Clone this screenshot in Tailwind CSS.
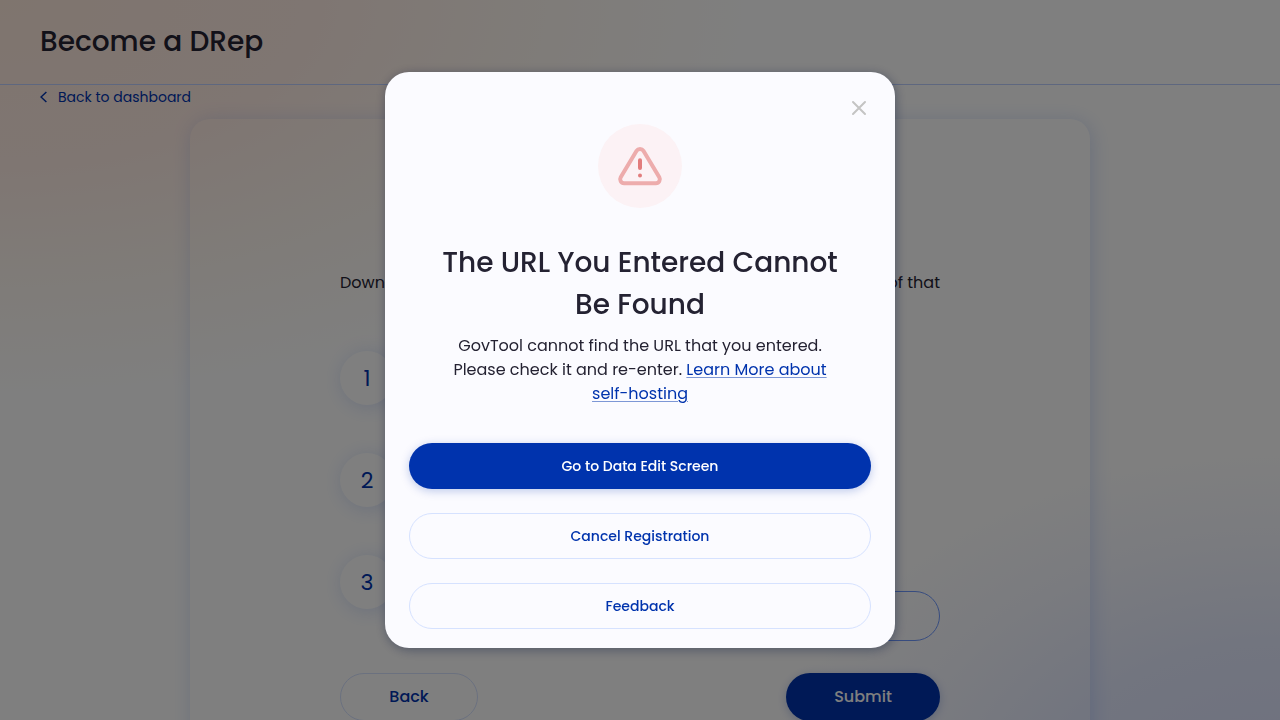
<!DOCTYPE html>
<html lang="en">
<head>
<meta charset="utf-8">
<meta name="viewport" content="width=device-width, initial-scale=1">
<title>Become a DRep</title>
<script src="https://cdn.jsdelivr.net/npm/@tailwindcss/browser@4"></script>
</head>
<body class="font-[Poppins,Inter,sans-serif] text-[#242232]">
<div class="h-screen overflow-hidden bg-white bg-[radial-gradient(ellipse_760px_400px_at_0px_0px,#ffeadd_0%,#ffece4_40%,#fff7f0_68%,transparent_100%),radial-gradient(ellipse_520px_360px_at_100%_112%,#dce0ff_0%,#e4eaff_45%,#f5f7ff_75%,transparent_100%)]">
  <header class="flex h-[85px] items-center border-b border-[#bccfff] px-10">
    <h1 class="text-[28px] font-medium">Become a DRep</h1>
  </header>
  <main class="flex flex-col pt-0.5">
    <a href="#" class="ml-10 flex h-5 items-center gap-2.5 self-start text-sm text-[#0033ad]">
      <svg class="h-3 w-2" viewBox="0 0 8 12" fill="none" stroke="currentColor" stroke-width="1.5"><path d="M6.400 1 1 6l5.400 5"/></svg>
      Back to dashboard
    </a>
    <section class="mx-auto mt-3 w-full max-w-[900px] rounded-[20px] px-[150px] pb-20 pt-[152px] shadow-[2px_2px_20px_0_rgba(47,98,220,0.2)]">
      <p class="flex justify-between whitespace-nowrap leading-6"><span>Down</span><span>of that</span></p>
      <ol class="mt-14 flex flex-col gap-12">
        <li class="flex gap-6"><span class="flex size-[54px] items-center justify-center rounded-full text-[22px] text-[#0033ad] shadow-[2px_2px_20px_0_rgba(47,98,220,0.2)]">1</span></li>
        <li class="flex gap-6"><span class="flex size-[54px] items-center justify-center rounded-full text-[22px] text-[#0033ad] shadow-[2px_2px_20px_0_rgba(47,98,220,0.2)]">2</span></li>
        <li class="flex gap-6">
          <span class="flex size-[54px] shrink-0 items-center justify-center rounded-full text-[22px] text-[#0033ad] shadow-[2px_2px_20px_0_rgba(47,98,220,0.2)]">3</span>
          <div class="grow pt-9">
            <input type="url" aria-label="URL" class="block h-[50px] w-full rounded-full border border-[#6f99ff] px-4">
          </div>
        </li>
      </ol>
      <div class="mt-8 flex justify-between">
        <button type="button" class="h-12 w-[138px] rounded-full border border-[#d6e2ff] font-medium text-[#0033ad]">Back</button>
        <button type="button" class="h-12 w-[154px] rounded-full bg-[#0033ad] font-medium text-white shadow-[0_2px_10px_0_rgba(0,51,173,0.25)]">Submit</button>
      </div>
    </section>
  </main>
</div>

<div class="fixed inset-0 flex items-center justify-center bg-black/50">
  <div role="dialog" aria-modal="true" aria-labelledby="dialog-title" class="relative w-[510px] rounded-3xl bg-[#fbfbff] px-6 pb-[19px] pt-[52px] text-center shadow-[1px_2px_11px_0_rgba(0,18,61,0.37)]">
    <button type="button" aria-label="Close" class="absolute right-6 top-6 flex size-6 items-center justify-center text-[#c4c4c4]">
      <svg class="size-6" viewBox="0 0 24 24" fill="none" stroke="currentColor" stroke-width="2" stroke-linecap="round"><path d="M6 6l12 12m0-12-12 12"/></svg>
    </button>
    <svg class="mx-auto size-[84px]" viewBox="0 0 84 84" fill="none">
      <circle cx="42" cy="42" r="42" fill="#fcf2f5"/>
      <path d="M38.600 26.800 22.700 53.200A4 4 0 0 0 26.100 59.200H57.900A4 4 0 0 0 61.300 53.200L45.400 26.800A4 4 0 0 0 38.600 26.800Z" stroke="#edacac" stroke-width="4" stroke-linejoin="round"/>
      <path d="M42 36.300v7.700M42 51.500v.1" stroke="#e27d7d" stroke-width="4" stroke-linecap="round"/>
    </svg>
    <h2 id="dialog-title" class="mt-[34px] whitespace-nowrap text-[28px] font-medium leading-[42px]">The URL You Entered Cannot<br>Be Found</h2>
    <p class="mt-2 whitespace-nowrap leading-6">GovTool cannot find the URL that you entered.<br>Please check it and re-enter. <a href="#" class="text-[#0033ad] underline decoration-[#0033ad]/50 decoration-1 underline-offset-2">Learn More about<br>self-hosting</a></p>
    <div class="mt-[37px] flex flex-col gap-6 text-sm font-medium">
      <button type="button" class="h-[46px] rounded-full bg-[#0033ad] text-white shadow-[0_2px_10px_0_rgba(0,51,173,0.25)]">Go to Data Edit Screen</button>
      <button type="button" class="h-[46px] rounded-full border border-[#d6e2ff] text-[#0033ad]">Cancel Registration</button>
      <button type="button" class="h-[46px] rounded-full border border-[#d6e2ff] text-[#0033ad]">Feedback</button>
    </div>
  </div>
</div>
</body>
</html>
